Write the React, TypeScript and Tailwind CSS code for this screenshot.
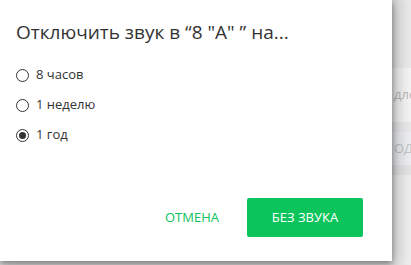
import React from "react";

function Radio({ checked, label }: { checked?: boolean; label: string }) {
  return (
    <label className="flex items-center h-[30px] gap-[7px]">
      <span className="w-[13px] h-[13px] rounded-full border border-[#333] flex items-center justify-center bg-white">
        {checked && <span className="w-[7px] h-[7px] rounded-full bg-[#333]" />}
      </span>
      <span className="text-[13px] text-[#333]">{label}</span>
    </label>
  );
}

export default function App() {
  return (
    <div
      className="w-[411px] h-[265px] overflow-hidden relative bg-[#f3f3f3] flex"
      style={{ fontFamily: '"Open Sans", "Noto Sans", sans-serif' }}
    >
      <div className="absolute inset-0 flex flex-col pl-[392px]">
        <div className="h-[68px] bg-[#ececec]" />
        <div className="h-[54px] bg-[#f6f6f6] flex items-center text-[13px] text-[#bbb] pl-[2px] whitespace-nowrap">дле</div>
        <div className="h-[10px] bg-[#ebebeb]" />
        <div className="h-[33px] bg-[#eef0f3] flex items-center text-[13px] text-[#c4c6c9] pl-[2px] whitespace-nowrap">ОДН</div>
        <div className="h-[10px] bg-[#e6e6e6]" />
        <div className="flex-1 bg-[#f0f0f0]" />
      </div>
      <div className="absolute inset-0 bg-[linear-gradient(to_right,rgba(0,0,0,0.1)_390px,rgba(0,0,0,0.01)_411px)]" />
      <div className="relative w-[392px] h-[261px] bg-white shadow-[0_3px_6px_rgba(0,0,0,0.35),2px_0_14px_rgba(0,0,0,0.2)] flex flex-col pl-[16px] pr-[29px]">
        <div className="pt-[19px] text-[19px] leading-[27px] text-[#333]">
          Отключить звук в “8 "А" ” на...
        </div>
        <div className="mt-[14px] flex flex-col">
          <Radio label="8 часов" />
          <Radio label="1 неделю" />
          <Radio checked label="1 год" />
        </div>
        <div className="mt-[48px] flex justify-end items-center gap-[28px]">
          <button className="text-[13px] text-[#0bc15c] h-[39px] px-[0px]">ОТМЕНА</button>
          <button className="text-[13px] text-white bg-[#0bc45c] h-[39px] w-[116px] rounded-[2px]">БЕЗ ЗВУКА</button>
        </div>
      </div>
    </div>
  );
}
